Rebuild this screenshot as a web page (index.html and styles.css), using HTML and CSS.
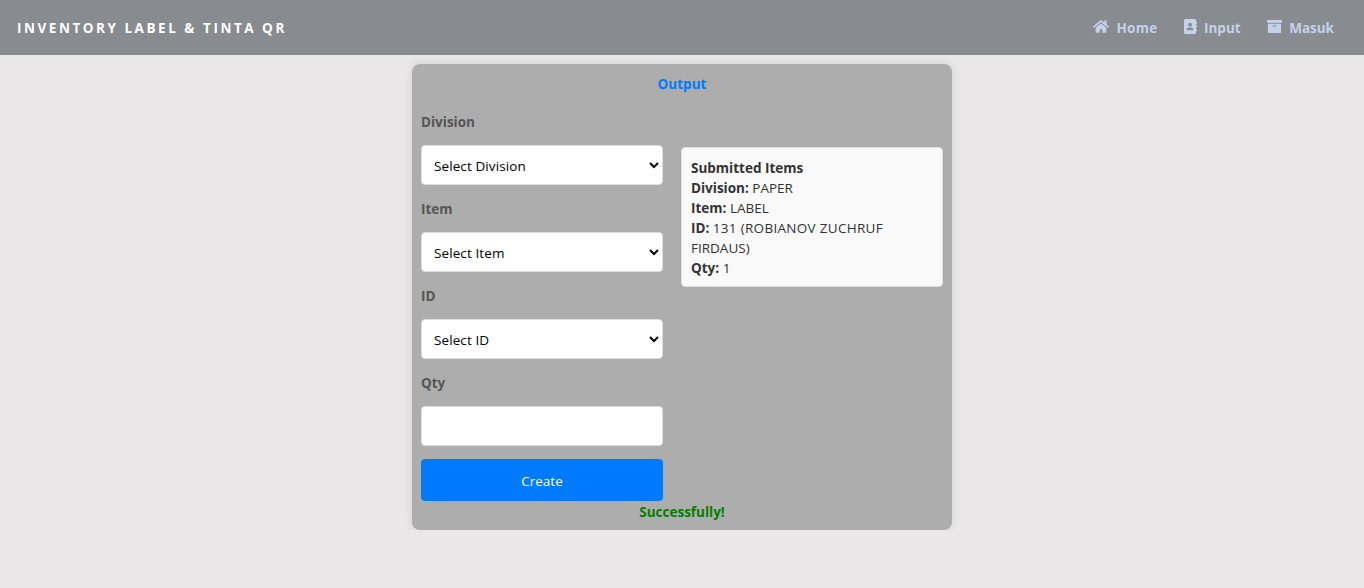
FILE: index.html
```html
<!DOCTYPE html>
<html lang="id">
<head>
<meta charset="utf-8">
<title>Inventory Label &amp; Tinta QR</title>
<link rel="stylesheet" href="styles.css">
</head>
<body>
<header class="navbar">
  <div class="brand">INVENTORY LABEL &amp; TINTA QR</div>
  <nav class="links">
    <a class="link"><svg class="icon home" viewBox="0 0 576 512"><path d="M280.4 148.3L96 300.1V464a16 16 0 0 0 16 16l112.1-.3a16 16 0 0 0 15.9-16V368a16 16 0 0 1 16-16h64a16 16 0 0 1 16 16v95.600a16 16 0 0 0 16 16.100L464 480a16 16 0 0 0 16-16V300L295.700 148.300a12.200 12.200 0 0 0-15.300 0zM571.600 251.500L488 182.600V44.100a12 12 0 0 0-12-12h-56a12 12 0 0 0-12 12v72.600L318.500 43a48 48 0 0 0-61 0L4.300 251.500a12 12 0 0 0-1.600 16.900l25.500 31a12 12 0 0 0 16.900 1.600l235.200-193.700a12.200 12.200 0 0 1 15.300 0L530.900 301a12 12 0 0 0 16.900-1.600l25.500-31a12 12 0 0 0-1.700-16.900z"/></svg><span class="home-text">Home</span></a>
    <a class="link"><svg class="icon book" viewBox="0 0 448 512"><path d="M436 160c6.600 0 12-5.400 12-12v-40c0-6.600-5.400-12-12-12h-20V48c0-26.500-21.500-48-48-48H48C21.500 0 0 21.500 0 48v416c0 26.500 21.500 48 48 48h320c26.500 0 48-21.500 48-48v-48h20c6.600 0 12-5.400 12-12v-40c0-6.600-5.400-12-12-12h-20v-64h20c6.600 0 12-5.400 12-12v-40c0-6.600-5.400-12-12-12h-20v-64h20zm-228-32c35.300 0 64 28.700 64 64s-28.700 64-64 64-64-28.700-64-64 28.700-64 64-64zm112 236.800c0 10.600-10 19.200-22.400 19.200H118.400C106 384 96 375.400 96 364.800v-19.200c0-31.800 30.100-57.600 67.200-57.600h5c12.300 5.100 25.700 8 39.800 8s27.600-2.900 39.800-8h5c37.100 0 67.200 25.800 67.200 57.600v19.200z"/></svg><span>Input</span></a>
    <a class="link"><svg class="icon archive" viewBox="0 0 512 512"><path d="M32 448c0 17.700 14.300 32 32 32h384c17.700 0 32-14.300 32-32V160H32v288zm160-212c0-6.600 5.400-12 12-12h104c6.600 0 12 5.400 12 12v8c0 6.600-5.400 12-12 12H204c-6.600 0-12-5.400-12-12v-8zM480 32H32C14.300 32 0 46.300 0 64v48c0 8.800 7.200 16 16 16h480c8.800 0 16-7.200 16-16V64c0-17.700-14.300-32-32-32z"/></svg><span>Masuk</span></a>
  </nav>
</header>
<main class="card">
  <h1 class="title">Output</h1>
  <div class="columns">
    <form class="form">
      <label class="label">Division</label>
      <select class="field"><option>Select Division</option></select>
      <label class="label">Item</label>
      <select class="field"><option>Select Item</option></select>
      <label class="label">ID</label>
      <select class="field"><option>Select ID</option></select>
      <label class="label">Qty</label>
      <input class="field" type="text">
      <button class="create" type="button">Create</button>
    </form>
    <section class="submitted">
      <div><b>Submitted Items</b></div>
      <div><b>Division:</b> <span>PAPER</span></div>
      <div><b>Item:</b> <span>LABEL</span></div>
      <div><b>ID:</b> <span class="person">131 (ROBIANOV ZUCHRUF</span><br>FIRDAUS)</div>
      <div><b>Qty:</b> <span>1</span></div>
    </section>
  </div>
  <p class="message"><span>Successfully!</span></p>
</main>
</body>
</html>
```
FILE: styles.css
```css
* { box-sizing: border-box; }
body {
  margin: 0;
  background: #e9e7e8;
  color: #333;
  font: 13.5px/20px "Open Sans", "Noto Sans", sans-serif;
}
.navbar {
  height: 55px;
  padding: 0 30px 0 17px;
  display: flex;
  align-items: center;
  justify-content: space-between;
  background: #888b8f;
}
.brand { color: #fff; font-weight: 700; letter-spacing: 2.53px; }
.links { display: flex; gap: 26.5px; }
.link { display: flex; align-items: center; color: #c5d2ea; font-weight: 700; }
.icon { height: 15px; margin: -2px 7px 0 0; fill: currentColor; }
.home { width: 16px; }
.home-text { letter-spacing: .3px; }
.book { width: 13px; }
.archive { width: 15px; }
.card {
  width: 540px;
  height: 466px;
  margin: 9px auto 0;
  padding: 10px 9px 0;
  border-radius: 8px;
  background: #adadad;
  box-shadow: 0 0 10px rgba(0, 0, 0, .1);
}
.title { margin: 0 0 18px; color: #007bff; font-size: 13.5px; line-height: 20px; text-align: center; }
.columns { display: flex; gap: 18px; align-items: flex-start; }
.form { width: 242px; display: flex; flex-direction: column; }
.label { height: 20px; margin-bottom: 13px; color: #555; font-weight: 700; }
.field {
  width: 100%;
  height: 40px;
  margin: 0 0 14px;
  padding: 2px 1px 0 8px;
  border: 1px solid #ddd;
  border-radius: 4px;
  background-color: #fff;
  color: #000;
  font: inherit;
  letter-spacing: .1px;
}
input.field { margin-bottom: 13px; }
.create {
  height: 42px;
  padding: 2px 0 0;
  border: 0;
  border-radius: 4px;
  background: #007bff;
  color: #fff;
  font: inherit;
}
.submitted {
  width: 262px;
  height: 140px;
  margin-top: 35px;
  padding: 10px 9px;
  border: 1px solid #ddd;
  border-radius: 4px;
  background: #f9f9f9;
}
.person { letter-spacing: .3px; }
.message { margin: 1px 0 0; color: #008000; font-weight: 700; text-align: center; }
```
